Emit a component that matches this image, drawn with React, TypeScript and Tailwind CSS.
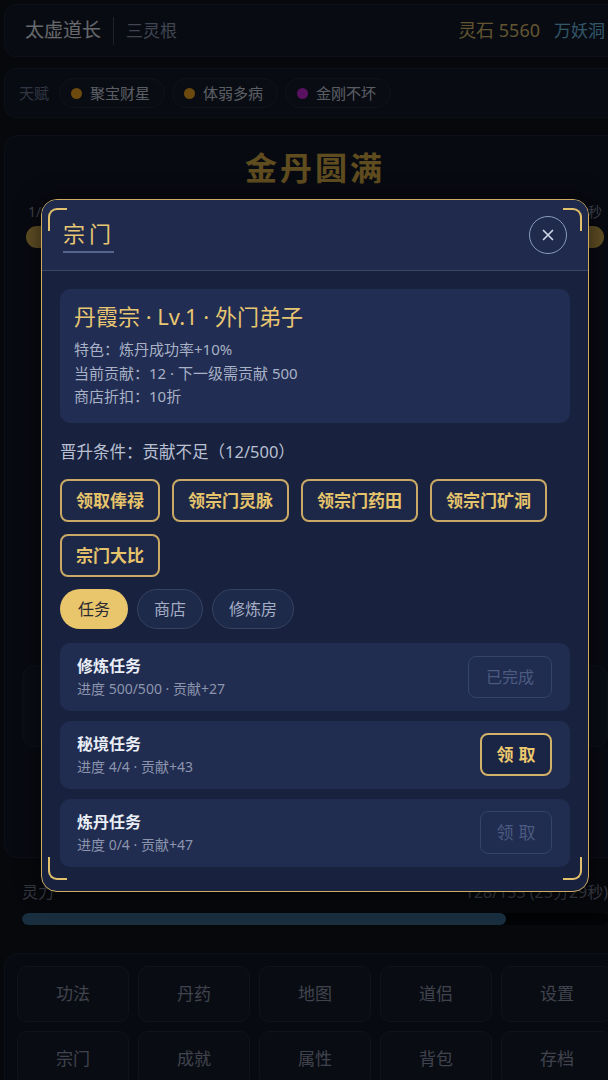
import React from "react";

const FONT = { fontFamily: '"Noto Sans", "Noto Sans CJK SC", sans-serif' };

function Corner({ pos }: { pos: "tl" | "tr" | "bl" | "br" }) {
  const map: Record<string, string> = {
    tl: "top-[8px] left-[6px] border-t-[2.5px] border-l-[2.5px] rounded-tl-[9px]",
    tr: "top-[8px] right-[6px] border-t-[2.5px] border-r-[2.5px] rounded-tr-[9px]",
    bl: "bottom-[11px] left-[6px] border-b-[2.5px] border-l-[2.5px] rounded-bl-[9px]",
    br: "bottom-[11px] right-[6px] border-b-[2.5px] border-r-[2.5px] rounded-br-[9px]",
  };
  return <div className={`absolute w-[19px] h-[23px] border-[#e2c06c] ${map[pos]}`} />;
}

function Pill({ color, label }: { color: string; label: string }) {
  return (
    <div className="flex items-center h-[30px] pl-[11px] pr-[14px] rounded-full border border-[#222a3e] bg-[#151b29]">
      <span className={`w-[11px] h-[11px] rounded-full ${color}`} />
      <span className="ml-[8px] text-[15px] text-[#c8cfde]">{label}</span>
    </div>
  );
}

function ActionBtn({ label }: { label: string }) {
  return (
    <button className="h-[43px] px-[14px] rounded-[8px] border-2 border-[#c9a965] bg-[#1d2848] text-[17px] font-bold text-[#e6c46c] leading-none">
      {label}
    </button>
  );
}

function Task({
  title,
  sub,
  btn,
  state,
}: {
  title: string;
  sub: string;
  btn: string;
  state: "done" | "ready" | "off";
}) {
  let cls = "";
  if (state === "done") cls = "w-[84px] h-[42px] border-[1.5px] border-[#34446a] text-[#4c5b80] text-[16px]";
  if (state === "ready") cls = "w-[72px] h-[43px] border-2 border-[#d2b169] text-[#ecc86e] text-[17px] font-bold bg-[#1a2444]";
  if (state === "off") cls = "w-[72px] h-[43px] border-[1.5px] border-[#34446a] text-[#4c5b80] text-[17px]";
  return (
    <div className="h-[68px] rounded-[10px] bg-[#202c50] flex items-center justify-between pl-[17px] pr-[18px]">
      <div className="flex flex-col">
        <span className="text-[16px] leading-[22px] font-bold text-[#eaeef6]">{title}</span>
        <span className="text-[14px] leading-[20px] mt-[2px] text-[#8c95ad]">{sub}</span>
      </div>
      <div className={`rounded-[8px] flex items-center justify-center ${cls}`}>
        <span className={state === "done" ? "" : "tracking-[5px] pl-[5px]"}>{btn}</span>
      </div>
    </div>
  );
}

export default function App() {
  const nav1 = ["功法", "丹药", "地图", "道侣", "设置"];
  const nav2 = ["宗门", "成就", "属性", "背包", "存档"];
  return (
    <div className="w-[608px] h-[1080px] overflow-hidden bg-[#0e121c]" style={FONT}>
      <div className="relative w-[630px] h-[1080px] px-[4px] pt-[4px]">
        {/* top bar */}
        <div className="h-[53px] rounded-[12px] border border-[#1e2536] bg-[#131928] flex items-center justify-between px-[20px]">
          <div className="flex items-center">
            <span className="text-[19px] text-[#e2e6ee]">太虚道长</span>
            <span className="w-px h-[28px] bg-[#444d62] mx-[12px]" />
            <span className="text-[17px] text-[#8e9ab4]">三灵根</span>
          </div>
          <div className="flex items-center gap-[14px]">
            <span className="text-[18px] text-[#d8bc6c]">灵石 5560</span>
            <span className="text-[17px] text-[#70c0e4]">万妖洞</span>
          </div>
        </div>
        {/* talents */}
        <div className="mt-[11px] h-[50px] rounded-[12px] border border-[#1e2536] bg-[#131928] flex items-center pl-[14px] gap-[7px]">
          <span className="text-[15px] text-[#6e7994] mr-[3px]">天赋</span>
          <Pill color="bg-[#f0a21c]" label="聚宝财星" />
          <Pill color="bg-[#f0a21c]" label="体弱多病" />
          <Pill color="bg-[#c626d6]" label="金刚不坏" />
        </div>
        {/* main card */}
        <div className="mt-[17px] h-[723px] rounded-[14px] border border-[#1e2536] bg-[#121826] flex flex-col px-[17px]">
          <div className="mt-[12px] text-center text-[32px] leading-[40px] font-bold tracking-[3px] text-[#d4aa46]">金丹圆满</div>
          <div className="mt-[13px] flex justify-between text-[14px] text-[#8a94ac] px-[6px]">
            <span>1/9 层</span>
            <span>约3分12秒</span>
          </div>
          <div className="mt-[4px] mx-[4px] h-[22px] rounded-full bg-[#d8b050]" />
          <div className="mt-[417px] h-[82px] rounded-[12px] border border-[#1e2535] bg-[#161d2d]" />
        </div>
        {/* spirit */}
        <div className="px-[18px] mt-[23px]">
          <div className="flex justify-between text-[16px] text-[#747c90] leading-[22px]">
            <span>灵力</span>
            <span>128/155 (25分29秒)</span>
          </div>
          <div className="mt-[10px] h-[12px] rounded-full bg-[#050709] overflow-hidden">
            <div className="h-full rounded-full bg-[#38688e]" style={{ width: "82.6%" }} />
          </div>
        </div>
        {/* nav */}
        <div className="mt-[28px] rounded-[14px] border border-[#1e2535] bg-[#121826] p-[12px] grid grid-cols-5 gap-[9px]">
          {[...nav1, ...nav2].map((n) => (
            <div
              key={n}
              className="h-[56px] rounded-[10px] border border-[#222a3d] bg-[#151b2a] flex items-center justify-center text-[17px] text-[#8e96aa]"
            >
              {n}
            </div>
          ))}
        </div>

        {/* overlay */}
        <div className="absolute inset-0 bg-black/55" />

        {/* modal */}
        <div className="absolute left-[41px] top-[199px] w-[548px] rounded-[16px] border-[1.5px] border-[#cdac62] bg-[#18213e] overflow-hidden shadow-[0_0_24px_rgba(0,0,0,0.6)]">
          <div className="h-[71px] bg-[#1f2a4c] border-b border-[#3a4664] flex items-center justify-between pl-[21px] pr-[21px]">
            <div className="flex flex-col">
              <span className="text-[22px] leading-[28px] tracking-[4px] text-[#e8c672] mt-[2px]">宗门</span>
              <span className="mt-[4px] h-[2px] w-[51px] bg-[#55648a]" />
            </div>
            <div className="w-[38px] h-[38px] rounded-full border-[1.5px] border-[#8a9bc0] flex items-center justify-center">
              <svg width="12" height="12" viewBox="0 0 12 12" fill="none" stroke="#cdd5e6" strokeWidth="1.7" strokeLinecap="round">
                <path d="M1.5 1.5 L10.5 10.5 M10.5 1.5 L1.5 10.5" />
              </svg>
            </div>
          </div>
          <div className="px-[18px] pt-[18px] pb-[24px]">
            <div className="rounded-[10px] bg-[#212d52] px-[14px] pt-[12px] pb-[14px]">
              <div className="text-[22px] leading-[30px] text-[#e8c672]">丹霞宗 · Lv.1 · 外门弟子</div>
              <div className="mt-[7px] text-[15px] leading-[23.5px] text-[#a8b1c6]">
                <div>特色：炼丹成功率+10%</div>
                <div>当前贡献：12 · 下一级需贡献 500</div>
                <div>商店折扣：10折</div>
              </div>
            </div>
            <div className="mt-[19px] text-[16.5px] leading-[20px] text-[#b8c0d2]">晋升条件：贡献不足（12/500）</div>
            <div className="mt-[17px] flex flex-wrap gap-x-[12px] gap-y-[12px]">
              <ActionBtn label="领取俸禄" />
              <ActionBtn label="领宗门灵脉" />
              <ActionBtn label="领宗门药田" />
              <ActionBtn label="领宗门矿洞" />
              <ActionBtn label="宗门大比" />
            </div>
            <div className="mt-[12px] flex gap-[9px]">
              <span className="h-[40px] px-[18px] rounded-full bg-[#e9c66c] text-[#2b2a32] text-[16px] flex items-center">任务</span>
              <span className="h-[40px] px-[16px] rounded-full border border-[#36425f] bg-[#1e2a4a] text-[#a4adc4] text-[16px] flex items-center">商店</span>
              <span className="h-[40px] px-[16px] rounded-full border border-[#36425f] bg-[#1e2a4a] text-[#a4adc4] text-[16px] flex items-center">修炼房</span>
            </div>
            <div className="mt-[14px] flex flex-col gap-[10px]">
              <Task title="修炼任务" sub="进度 500/500 · 贡献+27" btn="已完成" state="done" />
              <Task title="秘境任务" sub="进度 4/4 · 贡献+43" btn="领取" state="ready" />
              <Task title="炼丹任务" sub="进度 0/4 · 贡献+47" btn="领取" state="off" />
            </div>
          </div>
          <Corner pos="tl" />
          <Corner pos="tr" />
          <Corner pos="bl" />
          <Corner pos="br" />
        </div>
      </div>
    </div>
  );
}
